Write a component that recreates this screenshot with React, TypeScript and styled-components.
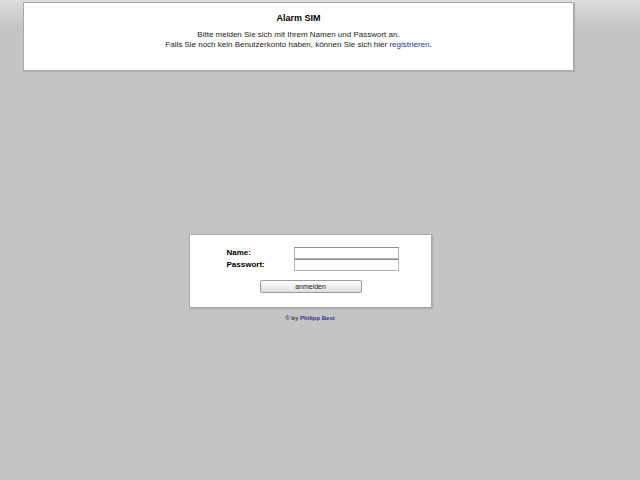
import { FC } from 'react';
import styled, { createGlobalStyle } from 'styled-components';

const Global = createGlobalStyle`
html, body {
  margin: 0;
  padding: 0;
  height: 100%;
}
body {
  background: linear-gradient(#dcdcdc 0px, #c4c4c4 30px, #c4c4c4 100%);
  background-color: #c4c4c4;
  font-family: "Liberation Sans", Arial, sans-serif;
  color: #000;
}
#root {
  min-height: 480px;
}
`

const PageS = styled.div`
width: 620px;
padding-top: 2px;
`

const HeaderS = styled.header`
margin-left: 23px;
width: 549px;
height: 67px;
background: #fff;
border: 1px solid #a8a8a8;
box-shadow: 1px 1px 1px #b0b0b0;
text-align: center;
.title{
  font: 700 9px "Liberation Sans", Arial, sans-serif;
  padding-top: 10px;
  margin-bottom: 7px;
}
.info{
  font: 400 8px/10px "Liberation Sans", Arial, sans-serif;
  color: #222;
}
`

const LinkS = styled.a`
color: #33338f;
text-decoration: none;
`

const LoginS = styled.form`
margin: 163px auto 0;
width: 241px;
height: 72px;
background: #fff;
border: 1px solid #a8a8a8;
box-shadow: 1px 1px 1px #b0b0b0;
box-sizing: content-box;
`

const FieldsS = styled.div`
display: grid;
grid-template-columns: 67px 105px;
grid-auto-rows: 12px;
margin-left: 37px;
padding-top: 12px;
`

const LabelS = styled.label`
font: 700 8px/12px "Liberation Sans", Arial, sans-serif;
`

const InputS = styled.input`
width: 105px;
height: 12px;
box-sizing: border-box;
border: 1px solid #b4b4b4;
border-top-color: #8c8c8c;
background: #fff;
padding: 0;
margin: 0;
display: block;
`

const ButtonS = styled.button`
display: block;
margin: 9px 0 0 70px;
width: 102px;
height: 13px;
padding: 0;
border: 1px solid #9a9a9a;
border-radius: 2px;
background: linear-gradient(#ffffff, #dedede);
font: 400 7px "Liberation Sans", Arial, sans-serif;
color: #222;
`

const FooterS = styled.div`
text-align: center;
margin-top: 7px;
font: 700 6px "Liberation Sans", Arial, sans-serif;
color: #444;
`

const Footer: FC<{ author: string }> = ({ author }) => (
  <FooterS>
    © by <LinkS href="#">{author}</LinkS>
  </FooterS>
)

export default function App() {
  return (
    <>
      <Global />
      <PageS>
        <HeaderS>
          <div className="title">Alarm SIM</div>
          <div className="info">
            Bitte melden Sie sich mit Ihrem Namen und Passwort an.<br />
            Falls Sie noch kein Benutzerkonto haben, können Sie sich hier <LinkS href="#">registrieren</LinkS>.
          </div>
        </HeaderS>
        <LoginS onSubmit={(e) => e.preventDefault()}>
          <FieldsS>
            <LabelS htmlFor="name">Name:</LabelS>
            <InputS id="name" type="text" />
            <LabelS htmlFor="pw">Passwort:</LabelS>
            <InputS id="pw" type="password" />
          </FieldsS>
          <ButtonS type="submit">anmelden</ButtonS>
        </LoginS>
        <Footer author="Philipp Best" />
      </PageS>
    </>
  )
}
